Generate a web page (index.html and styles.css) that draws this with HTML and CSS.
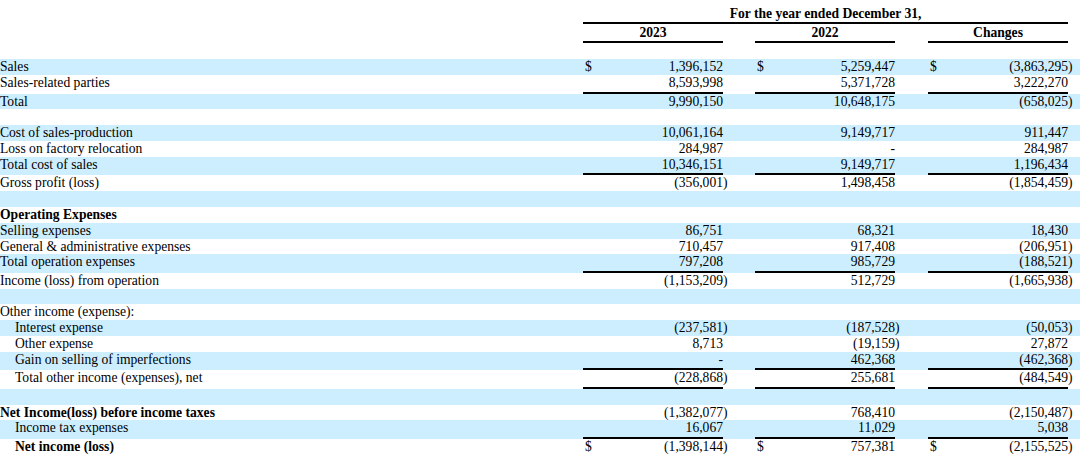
FILE: index.html
```html
<!DOCTYPE html>
<html lang="en">
<head>
<meta charset="utf-8">
<title>Statement of Operations</title>
<link rel="stylesheet" href="styles.css">
</head>
<body>
<table class="fin">
  <colgroup>
    <col class="c-label">
    <col class="c-dol"><col class="c-num"><col class="c-par"><col class="c-gap">
    <col class="c-dol"><col class="c-num"><col class="c-par"><col class="c-gap2">
    <col class="c-dol"><col class="c-num"><col class="c-par"><col class="c-trail">
  </colgroup>
  <thead>
    <tr class="hd1">
      <td></td>
      <td colspan="10" class="hcell ul">For the year ended December 31,</td>
      <td></td><td></td>
    </tr>
    <tr class="hd2">
      <td></td>
      <td colspan="2" class="hcell ul">2023</td><td></td><td></td>
      <td colspan="2" class="hcell ul">2022</td><td></td><td></td>
      <td colspan="2" class="hcell ul">Changes</td><td></td><td></td>
    </tr>
    <tr class="spacer"><td colspan="13"></td></tr>
  </thead>
  <tbody>
    <tr class="blue">
      <td class="lbl">Sales</td>
      <td class="dol">$</td><td class="num">1,396,152</td><td class="par"></td><td></td>
      <td class="dol">$</td><td class="num">5,259,447</td><td class="par"></td><td></td>
      <td class="dol">$</td><td class="num">(3,863,295</td><td class="par">)</td><td></td>
    </tr>
    <tr class="bl">
      <td class="lbl">Sales-related parties</td>
      <td class="dol ul"></td><td class="num ul">8,593,998</td><td class="par"></td><td></td>
      <td class="dol ul"></td><td class="num ul">5,371,728</td><td class="par"></td><td></td>
      <td class="dol ul"></td><td class="num ul">3,222,270</td><td class="par"></td><td></td>
    </tr>
    <tr class="blue">
      <td class="lbl">Total</td>
      <td class="dol"></td><td class="num">9,990,150</td><td class="par"></td><td></td>
      <td class="dol"></td><td class="num">10,648,175</td><td class="par"></td><td></td>
      <td class="dol"></td><td class="num">(658,025</td><td class="par">)</td><td></td>
    </tr>
    <tr class="empty"><td colspan="13"></td></tr>
    <tr class="blue">
      <td class="lbl">Cost of sales-production</td>
      <td class="dol"></td><td class="num">10,061,164</td><td class="par"></td><td></td>
      <td class="dol"></td><td class="num">9,149,717</td><td class="par"></td><td></td>
      <td class="dol"></td><td class="num">911,447</td><td class="par"></td><td></td>
    </tr>
    <tr>
      <td class="lbl">Loss on factory relocation</td>
      <td class="dol"></td><td class="num">284,987</td><td class="par"></td><td></td>
      <td class="dol"></td><td class="num">-</td><td class="par"></td><td></td>
      <td class="dol"></td><td class="num">284,987</td><td class="par"></td><td></td>
    </tr>
    <tr class="blue bl">
      <td class="lbl">Total cost of sales</td>
      <td class="dol ul"></td><td class="num ul">10,346,151</td><td class="par"></td><td></td>
      <td class="dol ul"></td><td class="num ul">9,149,717</td><td class="par"></td><td></td>
      <td class="dol ul"></td><td class="num ul">1,196,434</td><td class="par"></td><td></td>
    </tr>
    <tr>
      <td class="lbl">Gross profit (loss)</td>
      <td class="dol"></td><td class="num">(356,001</td><td class="par">)</td><td></td>
      <td class="dol"></td><td class="num">1,498,458</td><td class="par"></td><td></td>
      <td class="dol"></td><td class="num">(1,854,459</td><td class="par">)</td><td></td>
    </tr>
    <tr class="blue empty"><td colspan="13"></td></tr>
    <tr>
      <td class="lbl bold">Operating Expenses</td>
      <td colspan="12"></td>
    </tr>
    <tr class="blue">
      <td class="lbl">Selling expenses</td>
      <td class="dol"></td><td class="num">86,751</td><td class="par"></td><td></td>
      <td class="dol"></td><td class="num">68,321</td><td class="par"></td><td></td>
      <td class="dol"></td><td class="num">18,430</td><td class="par"></td><td></td>
    </tr>
    <tr>
      <td class="lbl">General &amp; administrative expenses</td>
      <td class="dol"></td><td class="num">710,457</td><td class="par"></td><td></td>
      <td class="dol"></td><td class="num">917,408</td><td class="par"></td><td></td>
      <td class="dol"></td><td class="num">(206,951</td><td class="par">)</td><td></td>
    </tr>
    <tr class="blue bl">
      <td class="lbl">Total operation expenses</td>
      <td class="dol ul"></td><td class="num ul">797,208</td><td class="par"></td><td></td>
      <td class="dol ul"></td><td class="num ul">985,729</td><td class="par"></td><td></td>
      <td class="dol ul"></td><td class="num ul">(188,521</td><td class="par">)</td><td></td>
    </tr>
    <tr>
      <td class="lbl">Income (loss) from operation</td>
      <td class="dol"></td><td class="num">(1,153,209</td><td class="par">)</td><td></td>
      <td class="dol"></td><td class="num">512,729</td><td class="par"></td><td></td>
      <td class="dol"></td><td class="num">(1,665,938</td><td class="par">)</td><td></td>
    </tr>
    <tr class="blue empty"><td colspan="13"></td></tr>
    <tr>
      <td class="lbl">Other income (expense):</td>
      <td colspan="12"></td>
    </tr>
    <tr class="blue">
      <td class="lbl ind">Interest expense</td>
      <td class="dol"></td><td class="num">(237,581</td><td class="par">)</td><td></td>
      <td class="dol"></td><td class="num">(187,528</td><td class="par">)</td><td></td>
      <td class="dol"></td><td class="num">(50,053</td><td class="par">)</td><td></td>
    </tr>
    <tr>
      <td class="lbl ind">Other expense</td>
      <td class="dol"></td><td class="num">8,713</td><td class="par"></td><td></td>
      <td class="dol"></td><td class="num">(19,159</td><td class="par">)</td><td></td>
      <td class="dol"></td><td class="num">27,872</td><td class="par"></td><td></td>
    </tr>
    <tr class="blue bl">
      <td class="lbl ind">Gain on selling of imperfections</td>
      <td class="dol ul"></td><td class="num ul">-</td><td class="par"></td><td></td>
      <td class="dol ul"></td><td class="num ul">462,368</td><td class="par"></td><td></td>
      <td class="dol ul"></td><td class="num ul">(462,368</td><td class="par">)</td><td></td>
    </tr>
    <tr class="bl">
      <td class="lbl ind">Total other income (expenses), net</td>
      <td class="dol ul"></td><td class="num ul">(228,868</td><td class="par">)</td><td></td>
      <td class="dol ul"></td><td class="num ul">255,681</td><td class="par"></td><td></td>
      <td class="dol ul"></td><td class="num ul">(484,549</td><td class="par">)</td><td></td>
    </tr>
    <tr class="blue empty"><td colspan="13"></td></tr>
    <tr>
      <td class="lbl bold">Net Income(loss) before income taxes</td>
      <td class="dol"></td><td class="num">(1,382,077</td><td class="par">)</td><td></td>
      <td class="dol"></td><td class="num">768,410</td><td class="par"></td><td></td>
      <td class="dol"></td><td class="num">(2,150,487</td><td class="par">)</td><td></td>
    </tr>
    <tr class="blue bl">
      <td class="lbl ind">Income tax expenses</td>
      <td class="dol ul"></td><td class="num ul">16,067</td><td class="par"></td><td></td>
      <td class="dol ul"></td><td class="num ul">11,029</td><td class="par"></td><td></td>
      <td class="dol ul"></td><td class="num ul">5,038</td><td class="par"></td><td></td>
    </tr>
    <tr>
      <td class="lbl ind bold">Net income (loss)</td>
      <td class="dol">$</td><td class="num">(1,398,144</td><td class="par">)</td><td></td>
      <td class="dol">$</td><td class="num">757,381</td><td class="par"></td><td></td>
      <td class="dol">$</td><td class="num">(2,155,525</td><td class="par">)</td><td></td>
    </tr>
  </tbody>
</table>
</body>
</html>
```

FILE: styles.css
```css
html, body {
  margin: 0;
  padding: 0;
  background: #ffffff;
}

body {
  font-family: "Liberation Serif", "Times New Roman", serif;
  font-size: 13.6px;
  color: #000000;
}

.fin {
  width: 1080px;
  table-layout: fixed;
  border-collapse: separate;
  border-spacing: 0;
  margin-top: 7px;
}

.c-label { width: 583px; }
.c-dol { width: 12px; }
.c-num { width: 128px; }
.c-par { width: 6px; }
.c-gap { width: 26px; }
.c-gap2 { width: 27px; }
.c-trail { width: 6px; }

.fin td {
  padding: 0;
  line-height: 15.8px;
  height: 15.8px;
  vertical-align: top;
  white-space: nowrap;
  overflow: visible;
}

.hd1 td {
  line-height: 14.8px;
  height: 14.8px;
}

.hcell {
  text-align: center;
  font-weight: bold;
}

.hd2 td {
  padding-top: 1.5px;
}

.spacer td {
  height: 16.3px;
}

.ul {
  border-bottom: 2px solid #000000;
}

.bl td.ul {
  padding-bottom: 0.7px;
}

.blue {
  background: #cceeff;
}

.lbl {
  padding-left: 1px;
}

.ind {
  padding-left: 15px !important;
}

.bold {
  font-weight: bold;
}

.dol {
  text-align: left;
  padding-left: 2px !important;
}

.num {
  text-align: right;
}

.par {
  text-align: left;
}
```
